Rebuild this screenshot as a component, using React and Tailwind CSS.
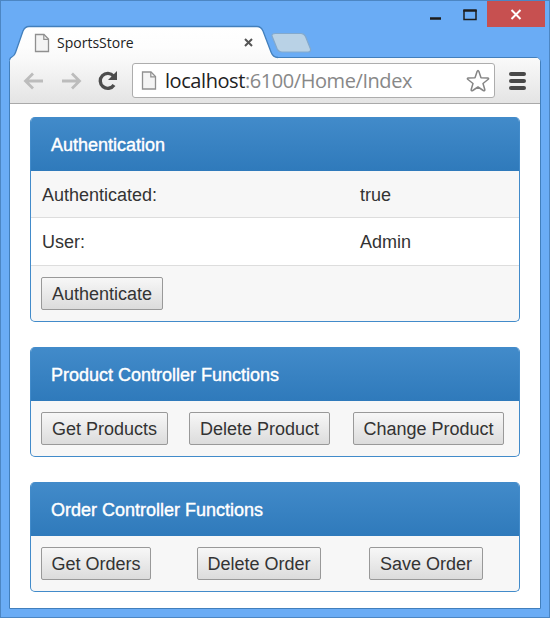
import React from "react";

function PageIcon({ className }) {
  return (
    <svg className={className} viewBox="0 0 16 20" fill="none">
      <path d="M1.500 1.500H10L14.500 6V18.500H1.500Z" fill="#f4f4f4" stroke="#909090" strokeWidth="1.300" />
      <path d="M9.800 1.500V6.300H14.500" stroke="#909090" strokeWidth="1.200" />
    </svg>
  );
}

function TitleBar() {
  return (
    <div className="relative z-10 h-[57px] shrink-0">
      <svg className="absolute left-0 top-0" width="550" height="60" viewBox="0 0 550 60" fill="none">
        <defs>
          <linearGradient id="tab" x1="0" y1="26" x2="0" y2="60" gradientUnits="userSpaceOnUse">
            <stop offset="0" stopColor="#fff" /><stop offset="0.600" stopColor="#fdfdfd" /><stop offset="1" stopColor="#f9f9f9" />
          </linearGradient>
        </defs>
        <path d="M8 54H12L10 60H8Z" fill="#6aacf5" />
        <path d="M9.500 60Q10 57.500 12.500 56.500Q14.500 55.500 15.500 52.500L23 31Q25 26.500 29 26.500H257Q261 26.500 263 31L271 52Q273 57.500 278 57.500V60Z" fill="url(#tab)" />
        <path d="M9.500 60Q10 57.500 12.500 56.500Q14.500 55.500 15.500 52.500L23 31Q25 26.500 29 26.500H257Q261 26.500 263 31L271 52Q273 57.500 278 57.500" stroke="#427fbc" strokeWidth="1.300" />
        <path d="M275.500 33.500H301Q304 33.500 305.500 36.500L310.500 49Q311 52 308 52H282Q278.500 52 277 48.500L272 36Q271.500 33.500 275.500 33.500Z" fill="#b9d2e6" stroke="#83a9cd" strokeWidth="1.200" />
      </svg>
      <div className="relative flex h-full items-start">
        <div className="flex w-[262px] items-center pl-[34px] pt-[32px]">
          <PageIcon className="h-5 w-4" />
          <span className="ml-[7px] flex-1 whitespace-nowrap pt-px font-['Open_Sans',sans-serif] text-[14px] leading-5 text-[#222]">SportsStore</span>
          <svg className="mr-[9px] h-[9px] w-[9px]" viewBox="0 0 9 9"><path d="M1 1L8 8M8 1L1 8" stroke="#555" strokeWidth="2" /></svg>
        </div>
        <div className="ml-auto flex items-start pr-[5px]">
          <svg className="mr-px h-[27px] w-[58px]" viewBox="0 0 58 27" fill="none">
            <path d="M2 18.500H13" stroke="#1c1c1c" strokeWidth="2.500" />
            <path d="M36 10V19.500H48V10" stroke="#1c1c1c" strokeWidth="1.500" /><path d="M35.300 10.500H48.700" stroke="#1c1c1c" strokeWidth="2.500" />
          </svg>
          <div className="mt-px flex h-[26px] w-[58px] items-center justify-center bg-[#c75050]">
            <svg className="h-[11px] w-[12px]" viewBox="0 0 12 11"><path d="M1.500 1L10.500 10M10.500 1L1.500 10" stroke="#fff" strokeWidth="2" /></svg>
          </div>
        </div>
      </div>
    </div>
  );
}

function Toolbar() {
  return (
    <div className="flex h-[46px] shrink-0 items-center rounded-t-[4px] border-b border-[#a9a9a9] bg-gradient-to-b from-[#fafafa] to-[#e4e4e4] pl-[13px] pr-[14px]">
      <svg className="h-5 w-[22px]" viewBox="0 0 22 20" fill="none"><path d="M20 10H3M10 2.500L2.500 10L10 17.500" stroke="#bcbcbc" strokeWidth="2.800" /></svg>
      <svg className="ml-[15px] h-5 w-[22px]" viewBox="0 0 22 20" fill="none"><path d="M2 10H19M12 2.500L19.500 10L12 17.500" stroke="#bcbcbc" strokeWidth="2.800" /></svg>
      <svg className="ml-[15px] h-[22px] w-[22px]" viewBox="0 0 22 22" fill="none">
        <path d="M17 15A7.500 7.500 0 1 1 16.500 6" stroke="#4d4d4d" strokeWidth="3.400" /><path d="M20 1V10H11Z" fill="#4d4d4d" />
      </svg>
      <div className="ml-[13px] flex h-[35px] w-[363px] items-center rounded-[3px] border border-[#adadad] bg-white pl-[8px] pr-[4px]">
        <PageIcon className="h-[21px] w-4" />
        <span className="ml-[8px] flex-1 whitespace-nowrap font-['Open_Sans',sans-serif] text-[20px] leading-[30px] tracking-[-0.430px] text-[#222]">localhost<span className="text-[#888]">:6100/Home/Index</span></span>
        <svg className="h-6 w-6" viewBox="0 0 24 24"><path d="M12 1.500Q12.500 1.500 12.900 2.600L15 8.700L21.500 9Q23.500 9.300 22 10.500L17 14.500L18.800 20.500Q19 22.500 17.300 21.500L12 18L6.700 21.500Q5 22.500 5.200 20.500L7 14.500L2 10.500Q.5 9.300 2.500 9L9 8.700L11.100 2.600Q11.500 1.500 12 1.500Z" fill="#fff" stroke="#858585" strokeWidth="1.500" strokeLinejoin="round" /></svg>
      </div>
      <div className="ml-auto flex w-[17px] flex-col gap-[3px]">
        <div className="h-[4px] rounded-sm bg-[#484848]" />
        <div className="h-[4px] rounded-sm bg-[#484848]" />
        <div className="h-[4px] rounded-sm bg-[#484848]" />
      </div>
    </div>
  );
}

function Panel({ title, className, children }) {
  return (
    <section className={`overflow-hidden rounded-[5px] border-x-[1.500px] border-b-[1.500px] border-[#428bca] bg-[#f7f7f7] ${className}`}>
      <h3 className="flex h-[54px] items-center bg-gradient-to-b from-[#428bca] to-[#2f7abb] pl-[20px] pt-[2px] text-[18px] text-white [-webkit-text-stroke:0.4px_white]">{title}</h3>
      {children}
    </section>
  );
}

function Button({ className, children }) {
  return (
    <button className={`flex h-[33px] shrink-0 items-center justify-center whitespace-nowrap rounded-[2px] border border-[#999] bg-gradient-to-b from-[#f7f7f7] to-[#dcdcdc] pt-[2px] text-[18px] text-[#333] ${className}`}>
      {children}
    </button>
  );
}

function Row({ label, value, className }) {
  return (
    <div className={`flex items-center border-b border-[#ddd] pl-[11px] pt-[2px] ${className}`}>
      <span className="w-[318px]">{label}</span>
      <span>{value}</span>
    </div>
  );
}

export default function App() {
  return (
    <div className="relative flex h-[618px] w-[550px] flex-col overflow-hidden bg-[#6aacf5] font-['Liberation_Sans',Arial,sans-serif] shadow-[inset_0_0_0_1px_#4c86c3]">
      <TitleBar />
      <div className="mx-[9px] flex h-[552px] flex-col rounded-t-[5px] border border-[#427fbc] bg-white">
        <Toolbar />
        <main className="flex flex-col pl-[20px] pt-[13px] text-[18px] text-[#333]">
          <Panel title="Authentication" className="h-[205px] w-[490px]">
            <Row label="Authenticated:" value="true" className="h-[47px]" />
            <Row label="User:" value="Admin" className="h-[48px] bg-white" />
            <div className="flex pl-[10px] pt-[11px]"><Button className="w-[122px]">Authenticate</Button></div>
          </Panel>
          <Panel title="Product Controller Functions" className="mt-[25px] h-[110px] w-[490px]">
            <div className="flex pl-[10px] pt-[11px]">
              <Button className="w-[127px]">Get Products</Button>
              <Button className="ml-[21px] w-[141px]">Delete Product</Button>
              <Button className="ml-[23px] w-[151px]">Change Product</Button>
            </div>
          </Panel>
          <Panel title="Order Controller Functions" className="mt-[25px] h-[110px] w-[490px]">
            <div className="flex pl-[10px] pt-[11px]">
              <Button className="w-[110px]">Get Orders</Button>
              <Button className="ml-[46px] w-[124px]">Delete Order</Button>
              <Button className="ml-[48px] w-[114px]">Save Order</Button>
            </div>
          </Panel>
        </main>
      </div>
    </div>
  );
}
